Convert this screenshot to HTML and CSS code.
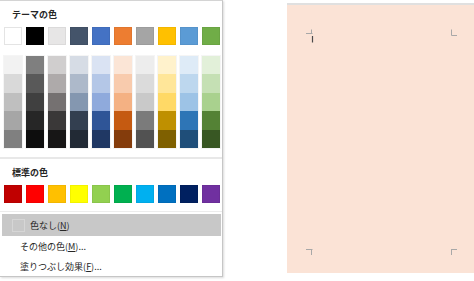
FILE: index.html
```html
<!DOCTYPE html>
<html lang="ja">
<head>
    <meta charset="UTF-8">
    <title>塗りつぶしの色</title>
    <link rel="stylesheet" href="styles.css">
</head>
<body>

    <!-- カラーメニュー -->
    <div class="menu">
        <div class="heading">テーマの色</div>
        <div class="swatches">
            <span class="sw white" style="background:#ffffff"></span>
            <span class="sw" style="background:#000000"></span>
            <span class="sw" style="background:#e7e6e6"></span>
            <span class="sw" style="background:#44546a"></span>
            <span class="sw" style="background:#4472c4"></span>
            <span class="sw" style="background:#ed7d31"></span>
            <span class="sw" style="background:#a5a5a5"></span>
            <span class="sw" style="background:#ffc000"></span>
            <span class="sw" style="background:#5b9bd5"></span>
            <span class="sw" style="background:#70ad47"></span>
        </div>

        <div class="tints">
            <div class="tcol"><i style="background:#f2f2f2"></i><i style="background:#d9d9d9"></i><i style="background:#bfbfbf"></i><i style="background:#a6a6a6"></i><i style="background:#808080"></i></div>
            <div class="tcol"><i style="background:#7f7f7f"></i><i style="background:#595959"></i><i style="background:#404040"></i><i style="background:#262626"></i><i style="background:#0d0d0d"></i></div>
            <div class="tcol"><i style="background:#d0cece"></i><i style="background:#aeaaaa"></i><i style="background:#757171"></i><i style="background:#3a3838"></i><i style="background:#171616"></i></div>
            <div class="tcol"><i style="background:#d6dce5"></i><i style="background:#adb9ca"></i><i style="background:#8497b0"></i><i style="background:#333f50"></i><i style="background:#222a35"></i></div>
            <div class="tcol"><i style="background:#dae3f3"></i><i style="background:#b4c7e7"></i><i style="background:#8faadc"></i><i style="background:#2f5597"></i><i style="background:#203864"></i></div>
            <div class="tcol"><i style="background:#fbe5d6"></i><i style="background:#f8cbad"></i><i style="background:#f4b183"></i><i style="background:#c55a11"></i><i style="background:#843c0c"></i></div>
            <div class="tcol"><i style="background:#ededed"></i><i style="background:#dbdbdb"></i><i style="background:#c9c9c9"></i><i style="background:#7b7b7b"></i><i style="background:#525252"></i></div>
            <div class="tcol"><i style="background:#fff2cc"></i><i style="background:#ffe699"></i><i style="background:#ffd966"></i><i style="background:#bf9000"></i><i style="background:#7f6000"></i></div>
            <div class="tcol"><i style="background:#deebf7"></i><i style="background:#bdd7ee"></i><i style="background:#9dc3e6"></i><i style="background:#2e75b6"></i><i style="background:#1f4e79"></i></div>
            <div class="tcol"><i style="background:#e2f0d9"></i><i style="background:#c5e0b4"></i><i style="background:#a9d18e"></i><i style="background:#548235"></i><i style="background:#385723"></i></div>
        </div>

        <div class="sep"></div>

        <div class="heading">標準の色</div>
        <div class="swatches">
            <span class="sw" style="background:#c00000"></span>
            <span class="sw" style="background:#ff0000"></span>
            <span class="sw" style="background:#ffc000"></span>
            <span class="sw" style="background:#ffff00"></span>
            <span class="sw" style="background:#92d050"></span>
            <span class="sw" style="background:#00b050"></span>
            <span class="sw" style="background:#00b0f0"></span>
            <span class="sw" style="background:#0070c0"></span>
            <span class="sw" style="background:#002060"></span>
            <span class="sw" style="background:#7030a0"></span>
        </div>

        <div class="sep thin"></div>

        <div class="item active"><span class="nocolor"></span>色なし(<u>N</u>)</div>
        <div class="item">その他の色(<u>M</u>)...</div>
        <div class="item">塗りつぶし効果(<u>F</u>)...</div>
    </div>

    <!-- ページ -->
    <div class="page">
        <svg class="marks" width="187" height="270" viewBox="0 0 187 270">
            <path d="M19 30.5H25.5M24.5 26.5V31" />
            <path d="M164.5 26.5V32.5H170" />
            <path d="M19 246.5H25.5M24.5 246V252" />
            <path d="M164 246.5H170M164.5 246V252" />
            <path class="cursor" d="M25.5 33V39.5" />
        </svg>
    </div>

</body>
</html>
```

FILE: styles.css
```css
* {
    margin: 0;
    padding: 0;
    box-sizing: border-box;
}
body {
    display: flex;
    align-items: flex-start;
    width: 474px;
    height: 281px;
    overflow: hidden;
    background: #fff;
    font-family: "Noto Sans CJK JP", "Noto Sans", sans-serif;
    font-size: 9px;
    color: #262626;
}

/* メニュー */
.menu {
    width: 223px;
    height: 277px;
    background: #fff;
    border-top: 1px solid #d4d4d4;
    border-right: 1px solid #c6c6c6;
    border-bottom: 1px solid #c6c6c6;
    box-shadow: 1px 1px 2px rgba(0, 0, 0, 0.15);
    display: flex;
    flex-direction: column;
}
.heading {
    height: 26px;
    padding-left: 12px;
    display: flex;
    align-items: center;
    font-weight: bold;
}
.swatches {
    display: flex;
    gap: 4px;
    padding-left: 4px;
    height: 18px;
}
.sw {
    width: 18px;
    height: 18px;
    box-shadow: inset 0 0 0 1px rgba(0, 0, 0, 0.05);
}
.sw.white {
    box-shadow: inset 0 0 0 1px #e4e4e4;
}

.tints {
    display: flex;
    gap: 4px;
    padding-left: 4px;
    margin-top: 11px;
    height: 92px;
}
.tcol {
    width: 18px;
    display: flex;
    flex-direction: column;
    box-shadow: 0 0 0 1px rgba(0, 0, 0, 0.04);
}
.tcol i {
    flex: 1;
}

.sep {
    height: 2px;
    margin-top: 9px;
    background: #e8e8e8;
}
.sep.thin {
    height: 1px;
    margin-top: 8px;
    margin-bottom: 2px;
    background: #ececec;
}

/* 項目 */
.item {
    height: 20px;
    padding-left: 20px;
    display: flex;
    align-items: center;
}
.item.active {
    height: 22px;
    margin: 0 1px 0 2px;
    padding-left: 10px;
    background: #c8c8c8;
}
.nocolor {
    width: 13px;
    height: 13px;
    margin-right: 5px;
    border: 1px solid #d6d6d6;
}
.item u {
    text-underline-offset: 1px;
}

/* ページ */
.page {
    width: 187px;
    height: 270px;
    margin-top: 3px;
    margin-left: 64px;
    border-top: 2px solid #e0e0e0;
    background: #fbe3d6;
}
.marks {
    display: block;
    margin-top: -2px;
}
.marks path {
    fill: none;
    stroke: #a8a8a8;
    stroke-width: 1;
}
.marks .cursor {
    stroke: #4a4a4a;
    stroke-width: 1.2;
}
```
